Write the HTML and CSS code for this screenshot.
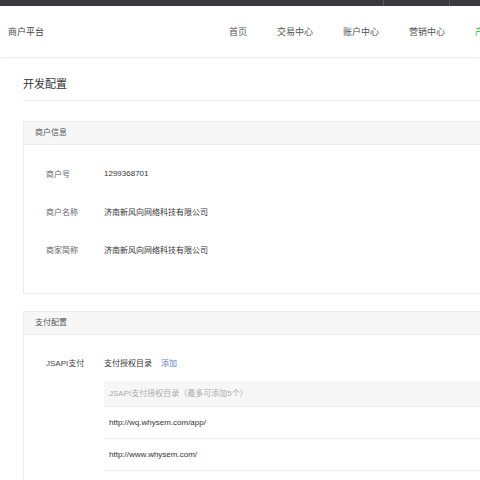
FILE: index.html
```html
<!DOCTYPE html>
<html lang="zh-CN">
<head>
<meta charset="utf-8">
<title>商户平台</title>
<link rel="stylesheet" href="styles.css">
</head>
<body>
<div class="topbar">
  <span class="topbar-sep sep-a"></span>
  <span class="topbar-sep sep-b"></span>
</div>
<header class="header">
  <div class="logo">商户平台</div>
  <nav class="nav">
    <a class="nav-item">首页</a>
    <a class="nav-item">交易中心</a>
    <a class="nav-item">账户中心</a>
    <a class="nav-item">营销中心</a>
    <a class="nav-item active">产品中心</a>
  </nav>
</header>
<main class="main">
  <h1 class="page-title">开发配置</h1>

  <section class="card card-info">
    <div class="card-head">商户信息</div>
    <div class="card-body info-body">
      <div class="row"><span class="label">商户号</span><span class="value">1299368701</span></div>
      <div class="row"><span class="label">商户名称</span><span class="value">济南新风向网络科技有限公司</span></div>
      <div class="row"><span class="label">商家简称</span><span class="value">济南新风向网络科技有限公司</span></div>
    </div>
  </section>

  <section class="card card-pay">
    <div class="card-head">支付配置</div>
    <div class="card-body pay-body">
      <div class="pay-row">
        <span class="label label-dark">JSAPI支付</span>
        <div class="pay-content">
          <div class="pay-sub"><span class="value">支付授权目录</span><a class="link">添加</a></div>
          <div class="dir-table">
            <div class="dir-head">JSAPI支付授权目录（最多可添加5个）</div>
            <div class="dir-row">http://wq.whysem.com/app/</div>
            <div class="dir-row">http://www.whysem.com/</div>
          </div>
        </div>
      </div>
    </div>
  </section>
</main>
</body>
</html>
```

FILE: styles.css
```css
html, body {
  margin: 0;
  padding: 0;
  background: #fff;
  overflow: hidden;
}
body {
  font-family: "Liberation Sans", "Noto Sans CJK SC", sans-serif;
  font-size: 8px;
  color: #333;
  width: 480px;
  height: 480px;
}
.topbar {
  position: relative;
  height: 6px;
  background: #38383d;
}
.topbar-sep {
  position: absolute;
  top: 0;
  width: 1px;
  height: 6px;
  background: #55555a;
}
.sep-a { left: 383px; }
.sep-b { left: 449px; }

.header {
  display: flex;
  align-items: center;
  height: 51px;
  border-bottom: 1px solid #eeeeee;
  box-shadow: 0 1px 2px rgba(0,0,0,0.03);
  white-space: nowrap;
}
.logo {
  margin-left: 8px;
  font-size: 9px;
  color: #444;
}
.nav {
  display: flex;
  gap: 30px;
  margin-left: 185px;
}
.nav-item {
  font-size: 9px;
  color: #555;
}
.nav-item.active { color: #44b549; }

.main {
  padding: 17px 0 0 23px;
  width: 900px;
}
.page-title {
  margin: 0;
  font-size: 11px;
  font-weight: normal;
  line-height: 18px;
  color: #333;
  padding-bottom: 7px;
  border-bottom: 1px solid #ececec;
  margin-bottom: 20px;
}
.card {
  border: 1px solid #ececec;
  margin-bottom: 17px;
}
.card-head {
  height: 22px;
  line-height: 22px;
  padding-left: 11px;
  background: #f7f7f7;
  border-bottom: 1px solid #ececec;
  color: #555;
}
.info-body {
  padding: 9px 0 25px 0;
}
.row {
  display: flex;
  align-items: center;
  height: 38px;
}
.label {
  width: 58px;
  padding-left: 22px;
  color: #666;
  flex: none;
}
.label-dark { color: #444; }
.value { color: #333; }

.pay-body {
  padding: 20px 0 10px 0;
}
.pay-row {
  display: flex;
  align-items: flex-start;
}
.pay-row .label {
  line-height: 18px;
}
.pay-content {
  flex: 1;
}
.pay-sub {
  line-height: 18px;
  margin-bottom: 8px;
}
.link {
  color: #5a78c8;
  margin-left: 9px;
}
.dir-head {
  height: 25px;
  line-height: 25px;
  padding-left: 5px;
  background: #f7f7f7;
  border-bottom: 1px solid #ececec;
  color: #aaa;
}
.dir-row {
  height: 31px;
  line-height: 31px;
  padding-left: 5px;
  border-bottom: 1px solid #ececec;
  color: #333;
}
```
